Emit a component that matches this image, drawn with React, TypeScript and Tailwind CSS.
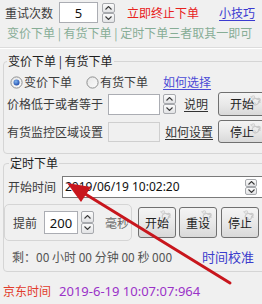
import React from "react";

function Spin({ h = 20, w = 13 }: { h?: number; w?: number }) {
  const half = h / 2;
  const Part = ({ up }: { up: boolean }) => (
    <div
      className="flex items-center justify-center border border-[#a7a9ad] rounded-[2px] bg-linear-to-b from-[#fbfbfb] to-[#e2e3e5]"
      style={{ height: half, width: w }}
    >
      <svg width="7" height="4" viewBox="0 0 7 4">
        <path
          d={up ? "M0.5 3.5 L3.5 0.5 L6.5 3.5" : "M0.5 0.5 L3.5 3.5 L6.5 0.5"}
          stroke="#3a3a3a"
          strokeWidth="1.1"
          fill="none"
        />
      </svg>
    </div>
  );
  return (
    <div className="flex flex-col shrink-0">
      <Part up />
      <Part up={false} />
    </div>
  );
}

function Swirl() {
  return (
    <svg
      className="absolute right-[1px] top-[1px]"
      width="15"
      height="13"
      viewBox="0 0 15 13"
    >
      <path
        d="M8 6 a1.6 1.6 0 1 1 1.6 1.6 a3.2 3.2 0 1 1 -3.2 -3.2 a4.6 4.6 0 0 1 4.6 4.6"
        stroke="#c9c9c9"
        strokeWidth="1.2"
        fill="none"
      />
      <path
        d="M3 3 a1.3 1.3 0 1 1 1.3 1.3 a2.4 2.4 0 0 1 -2.4 -2.4"
        stroke="#d2d2d2"
        strokeWidth="1.1"
        fill="none"
      />
      <path
        d="M4 10 a1.3 1.3 0 1 1 1.3 1.3"
        stroke="#d2d2d2"
        strokeWidth="1.1"
        fill="none"
      />
    </svg>
  );
}

function Btn({
  label,
  w,
  h,
  className = "",
}: {
  label: string;
  w: number;
  h: number;
  className?: string;
}) {
  return (
    <div
      className={
        "relative shrink-0 flex items-center justify-center border border-[#707070] rounded-[3px] bg-linear-to-b from-[#f4f4f4] via-[#e9e9e9] to-[#d9d9d9] text-[#222] overflow-hidden " +
        className
      }
      style={{ width: w, height: h }}
    >
      <Swirl />
      <span className="relative">{label}</span>
    </div>
  );
}

function Radio({ checked }: { checked?: boolean }) {
  return (
    <svg width="13" height="13" viewBox="0 0 13 13" className="shrink-0">
      <defs>
        <linearGradient id="rb" x1="0" y1="0" x2="1" y2="1">
          <stop offset="0" stopColor="#e6e6e6" />
          <stop offset="1" stopColor="#fbfbfb" />
        </linearGradient>
        <radialGradient id="rd" cx="0.4" cy="0.35" r="0.7">
          <stop offset="0" stopColor="#7fb4f0" />
          <stop offset="1" stopColor="#1b47a8" />
        </radialGradient>
      </defs>
      <circle cx="6.5" cy="6.5" r="5.6" fill="url(#rb)" stroke="#8e8f8f" />
      {checked && <circle cx="6.5" cy="6.5" r="3" fill="url(#rd)" />}
    </svg>
  );
}

export default function App() {
  return (
    <div className="relative w-[262px] h-[304px] overflow-hidden bg-[#f0f0f0] text-[12px] leading-[16px] text-[#3c3c3c] font-['Noto_Sans_CJK_SC','Noto_Sans',sans-serif] whitespace-nowrap">
      {/* row 1 */}
      <div className="flex items-center h-[21px] mt-[2px] pl-[5px]">
        <span>重试次数</span>
        <div className="ml-[6px] w-[39px] h-[21px] bg-white border border-[#abadb3] flex items-center justify-center font-['Noto_Sans',sans-serif] text-[13px] text-[#111]">
          5
        </div>
        <div className="ml-[4px]">
          <Spin h={20} w={13} />
        </div>
        <span className="ml-[12px] text-[#e8221d]">立即终止下单</span>
        <span className="ml-[20px] text-[#3b3bd0] underline underline-offset-2">
          小技巧
        </span>
      </div>

      {/* row 2 */}
      <div className="mt-[2px] pl-[7px] h-[16px] text-[#87ad96]">
        变价下单 | 有货下单 | 定时下单三者取其一即可
      </div>

      {/* separator */}
      <div className="mt-[6px] h-[2px] border-t border-t-[#dcdcdc] border-b border-b-white" />

      {/* group 1 */}
      <fieldset className="mt-[4px] ml-[3px] w-[282px] border border-[#d5d5d5] rounded-[4px] pb-[10px]">
        <legend className="ml-[3px] px-[1px] text-[#1e1e1e] leading-[16px]">
          变价下单 | 有货下单
        </legend>
        <div className="mt-[4px] h-[18px] flex items-center pl-[6px]">
          <Radio checked />
          <span className="ml-[1px]">变价下单</span>
          <span className="ml-[14px]">
            <Radio />
          </span>
          <span className="ml-[1px]">有货下单</span>
          <span className="ml-[15px] text-[#4a4ad6] underline underline-offset-2">
            如何选择
          </span>
        </div>
        <div className="mt-[1px] h-[24px] flex items-center pl-[3px]">
          <span className="w-[96px]">价格低于或者等于</span>
          <div className="ml-[5px] w-[52px] h-[21px] bg-white border border-[#abadb3]" />
          <div className="ml-[3px]">
            <Spin h={20} w={13} />
          </div>
          <span className="ml-[8px] underline underline-offset-2 text-[#333]">
            说明
          </span>
          <Btn label="开始" w={48} h={24} className="ml-[10px]" />
        </div>
        <div className="mt-[4px] h-[23px] flex items-center pl-[3px]">
          <span className="w-[96px]">有货监控区域设置</span>
          <div className="ml-[5px] w-[52px] h-[20px] bg-[#f0f0f0] border border-[#cfcfcf]" />
          <span className="ml-[5px] underline underline-offset-2 text-[#333]">
            如何设置
          </span>
          <Btn label="停止" w={48} h={23} className="ml-[5px]" />
        </div>
      </fieldset>

      {/* group 2 */}
      <fieldset className="mt-[1px] ml-[3px] w-[282px] border border-[#d5d5d5] rounded-[4px] pb-[6px]">
        <legend className="ml-[5px] px-[1px] text-[#1e1e1e] leading-[16px]">
          定时下单
        </legend>
        <div className="mt-[5px] h-[21px] flex items-center pl-[4px]">
          <span className="w-[48px]">开始时间</span>
          <div className="ml-[6px] w-[208px] h-[22px] bg-white border border-[#7a7a7a] flex items-center pl-[2px] pr-[12px]">
            <span className="font-['Noto_Sans',sans-serif] text-[12px] text-[#111]">
              2019/06/19 10:02:20
            </span>
            <div className="ml-auto">
              <Spin h={16} w={12} />
            </div>
          </div>
        </div>
        <div className="mt-[7px] flex items-center">
          <div className="w-[128px] h-[37px] border border-[#d5d5d5] rounded-[5px] flex items-center pl-[8px]">
            <span>提前</span>
            <div className="ml-[7px] w-[34px] h-[23px] bg-white border border-[#abadb3] flex items-center justify-center font-['Noto_Sans',sans-serif] text-[13px] text-[#111]">
              200
            </div>
            <div className="ml-[3px]">
              <Spin h={23} w={13} />
            </div>
            <span className="ml-[11px] text-[#6a6a6a]">毫秒</span>
          </div>
          <Btn label="开始" w={38} h={31} className="ml-[6px]" />
          <Btn label="重设" w={38} h={31} className="ml-[3px]" />
          <Btn label="停止" w={38} h={31} className="ml-[4px]" />
        </div>
        <div className="mt-[8px] h-[16px] w-[252px] flex items-center justify-between pl-[8px] pr-[2px]">
          <span className="text-[#555]">剩：00 小时 00 分钟 00 秒 000</span>
          <span className="text-[#3b3bcc] text-[13px]">时间校准</span>
        </div>
      </fieldset>

      {/* bottom */}
      <div className="mt-[10px] h-[18px] flex items-center pl-[3px]">
        <span className="text-[#e23c2c]">京东时间</span>
        <span className="ml-[8px] text-[#9a32c8] font-['Noto_Sans',sans-serif] text-[13px]">
          2019-6-19 10:07:07:964
        </span>
      </div>

      {/* red arrow overlay */}
      <svg
        className="absolute left-0 top-0 pointer-events-none"
        width="262"
        height="304"
        viewBox="0 0 262 304"
      >
        <line
          x1="230"
          y1="283"
          x2="82"
          y2="192"
          stroke="#c8161d"
          strokeWidth="3"
          strokeLinecap="round"
        />
        <polygon points="67,183 91,187 81,202" fill="#c8161d" />
      </svg>
    </div>
  );
}
